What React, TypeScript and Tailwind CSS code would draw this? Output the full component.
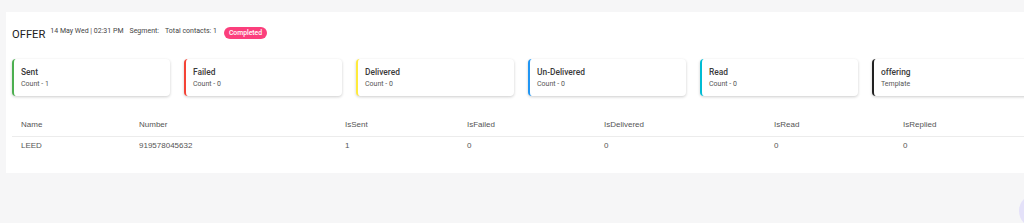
const STATS = [
  { title: "Sent", sub: "Count - 1", color: "border-l-[#4caf50]" },
  { title: "Failed", sub: "Count - 0", color: "border-l-[#f44336]" },
  { title: "Delivered", sub: "Count - 0", color: "border-l-[#ffeb3b]" },
  { title: "Un-Delivered", sub: "Count - 0", color: "border-l-[#2196f3]" },
  { title: "Read", sub: "Count - 0", color: "border-l-[#00bcd4]" },
  { title: "offering", sub: "Template", color: "border-l-[#212121]" },
];

const COLS = [
  { label: "Name", w: "w-[118px]" },
  { label: "Number", w: "w-[206px]" },
  { label: "IsSent", w: "w-[122px]" },
  { label: "IsFailed", w: "w-[137px]" },
  { label: "IsDelivered", w: "w-[170px]" },
  { label: "IsRead", w: "w-[129px]" },
  { label: "IsReplied", w: "w-[120px]" },
];

const ROW = ["LEED", "919578045632", "1", "0", "0", "0", "0"];

export default function App() {
  return (
    <div className="relative h-[223px] w-[1024px] overflow-hidden bg-[#f6f6f7] font-['Roboto',sans-serif]">
      <div className="ml-[6px] mt-[12px] w-[1040px] bg-white pb-[22px] pl-[6px] pt-[14px]">
        <div className="flex items-start">
          <h1 className="mt-[2px] text-[11.2px] font-normal leading-[14px] text-[#222]">OFFER</h1>
          <div className="ml-[5px] flex gap-[6px] text-[7px] leading-[10px] text-[#444]">
            <span>14 May Wed | 02:31 PM</span>
            <span>Segment:</span>
            <span>Total contacts: 1</span>
          </div>
          <span className="ml-[7px] mt-[1px] rounded-full bg-[#fb3f7c] px-[5px] text-[6.8px] font-medium leading-[12px] text-white">
            Completed
          </span>
        </div>

        <div className="mt-[17px] flex gap-[14px]">
          {STATS.map((s) => (
            <div
              key={s.title}
              className={`h-[37px] w-[158px] shrink-0 rounded-[4px] border-l-[2px] bg-white pl-[7px] pt-[8px] shadow-[0_1px_3px_rgba(0,0,0,0.2)] ${s.color}`}
            >
              <p className="text-[8.4px] font-medium leading-[11px] text-[#3a3a3a]">{s.title}</p>
              <p className="mt-[1px] text-[7px] leading-[10px] text-[#555]">{s.sub}</p>
            </div>
          ))}
        </div>

        <div className="mt-[24px] font-['Liberation_Sans',sans-serif] text-[8px] text-[#555]">
          <div className="flex border-b border-[#ececec] pb-[6px] pl-[9px]">
            {COLS.map((c) => (
              <div key={c.label} className={`${c.w} shrink-0 leading-[10px]`}>
                {c.label}
              </div>
            ))}
          </div>
          <div className="flex pl-[9px] pt-[4px]">
            {ROW.map((v, i) => (
              <div key={i} className={`${COLS[i].w} shrink-0 leading-[10px]`}>
                {v}
              </div>
            ))}
          </div>
        </div>
      </div>
      <div className="absolute left-[1019px] top-[194px] h-[34px] w-[34px] rounded-full bg-[#d8d3fa] opacity-60" />
    </div>
  );
}
